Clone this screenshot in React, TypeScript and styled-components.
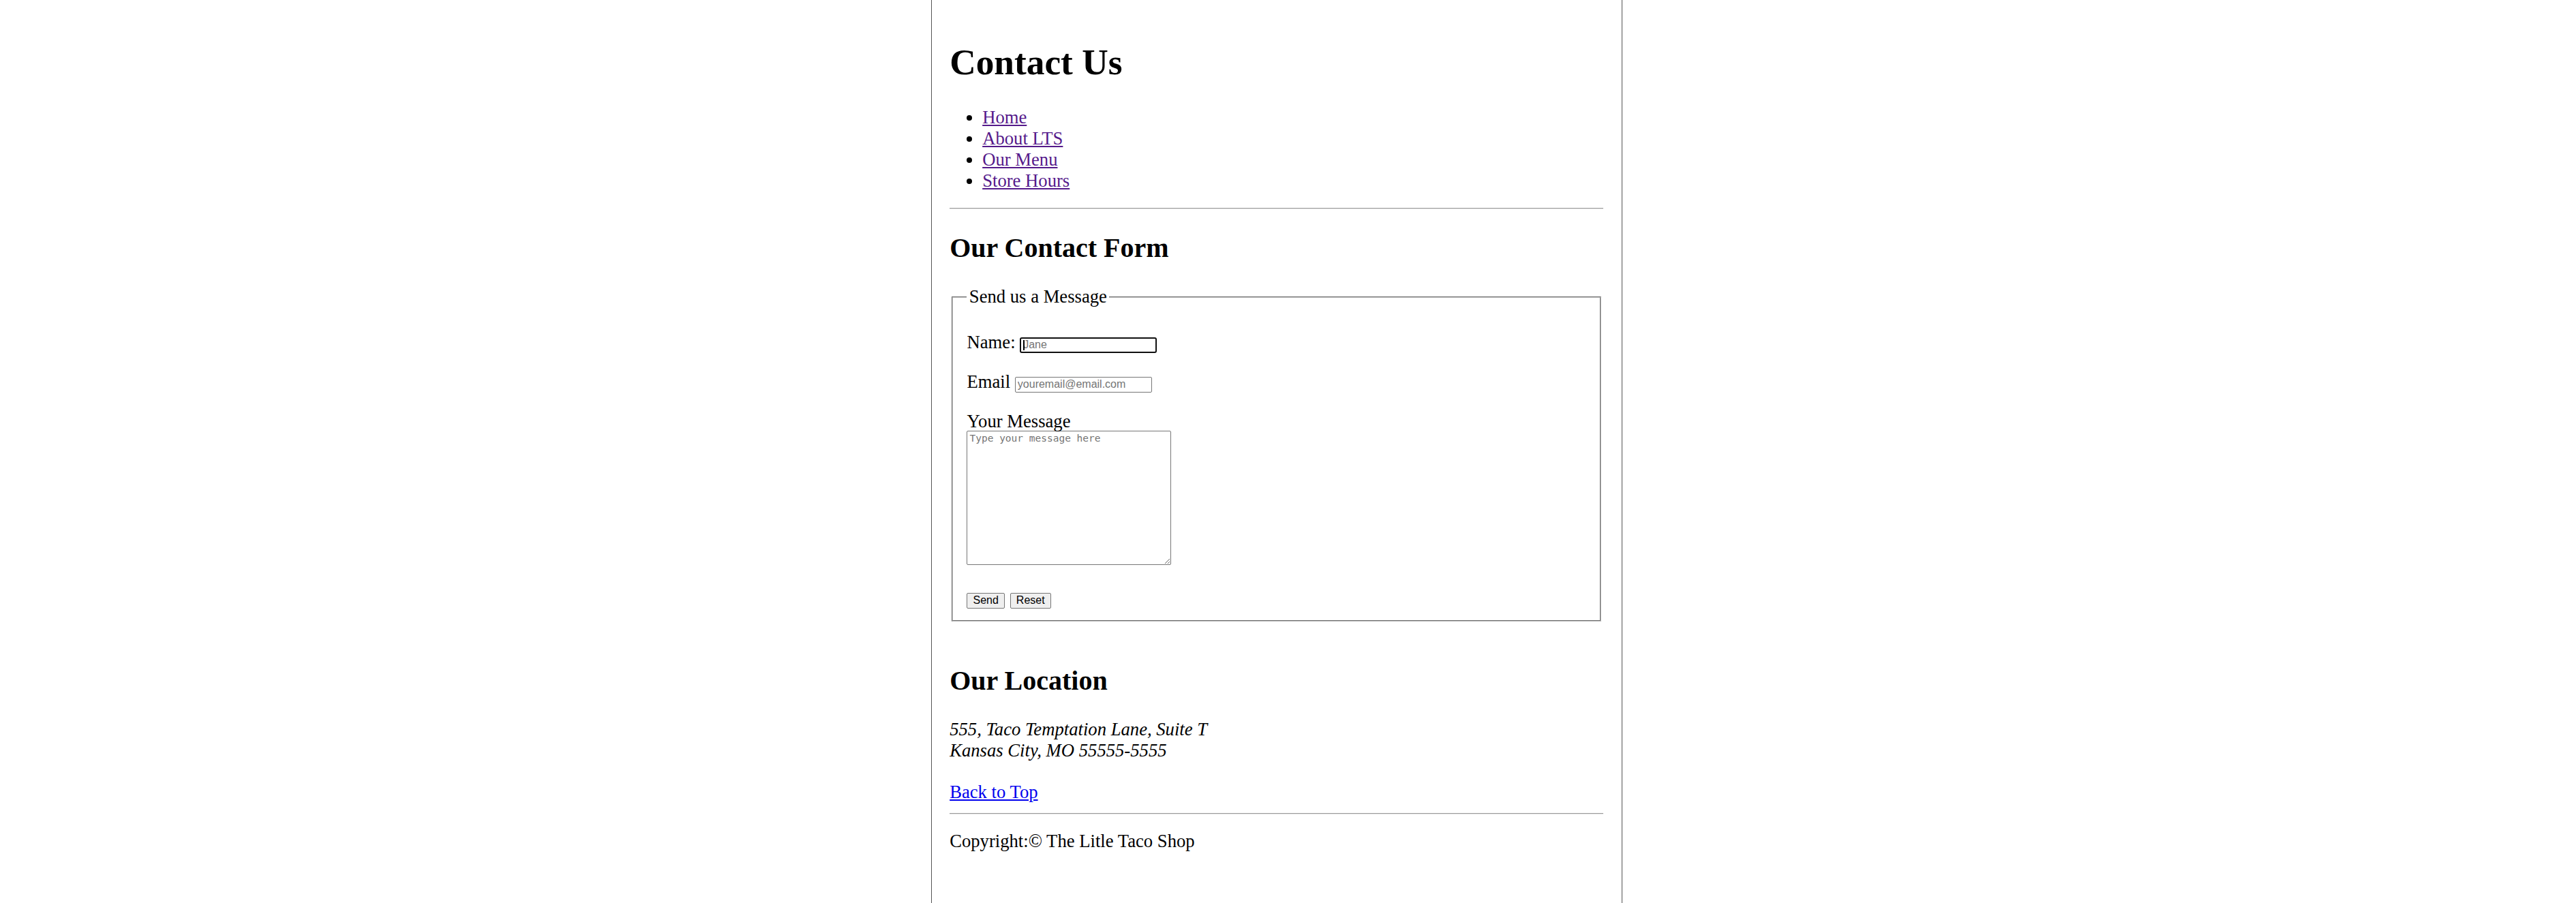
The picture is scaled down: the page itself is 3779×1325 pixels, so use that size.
import React from "react";
import styled, { createGlobalStyle } from "styled-components";

const GlobalStyle = createGlobalStyle`
  html,
  body {
    margin: 0;
    background: #fff;
  }

  body {
    font-family: "Liberation Serif", "Times New Roman", serif;
    font-size: 26.67px;
    color: #000;
  }
`;

const Page = styled.div`
  box-sizing: border-box;
  width: 1014px;
  min-height: 100vh;
  margin-left: calc(50% - 524px);
  padding: 24px 26.67px 40px;
  border-left: 1px solid #555;
  border-right: 1px solid #555;
`;

const Title = styled.h1`
  font-size: 53.33px;
  font-weight: bold;
  margin: 35.7px 0;
`;

const NavList = styled.ul`
  margin: 26.67px 0 23.67px;
  padding-left: 48px;
  list-style: disc;
`;

const NavLink = styled.a`
  color: #551a8b;
  text-decoration: underline;
`;

const Rule = styled.hr<{ $flush?: boolean }>`
  height: 0;
  margin: ${(p) => (p.$flush ? "0" : "13.33px 0")};
  border: 0;
  border-top: 1px solid #9a9a9a;
  border-bottom: 1px solid #e6e6e6;
`;

const SectionTitle = styled.h2`
  font-size: 40px;
  font-weight: bold;
  margin: 33.2px 0;
`;

const ContactForm = styled.form`
  margin: 0 0 63px;
`;

const Fieldset = styled.fieldset`
  margin: 0 3.33px;
  padding: 9.33px 20px 16.67px;
  border: 2px groove #c0c0c0;
  min-width: min-content;
`;

const Legend = styled.legend`
  padding: 0 3.33px;
`;

const Field = styled.p`
  margin: 26.67px 0;
`;

const CaretWrap = styled.span`
  position: relative;
  display: inline-flex;
  vertical-align: baseline;
`;

const Caret = styled.span`
  position: absolute;
  left: 5px;
  top: 4px;
  width: 1.5px;
  height: 15px;
  background: #000;
`;

const TextInput = styled.input<{ $focused?: boolean }>`
  box-sizing: border-box;
  width: 201px;
  height: 23px;
  margin: 0;
  padding: ${(p) => (p.$focused ? "0 2px 0 3px" : "1px 3px")};
  border: ${(p) => (p.$focused ? "2px solid #101010" : "1px solid #767676")};
  border-radius: ${(p) => (p.$focused ? "3px" : "2px")};
  outline: none;
  font-family: "Liberation Sans", Arial, sans-serif;
  font-size: 16px;
  color: #000;
  vertical-align: baseline;

  &::placeholder {
    color: #757575;
  }
`;

const MessageBox = styled.textarea`
  display: block;
  box-sizing: border-box;
  width: 300px;
  height: 197px;
  margin: -2px 0 0;
  padding: 2px 3px;
  border: 1px solid #767676;
  border-radius: 2px;
  outline: none;
  font-family: "DejaVu Sans Mono", monospace;
  font-size: 14.5px;

  &::placeholder {
    color: #757575;
  }
`;

const ButtonRow = styled.div`
  padding-top: 7px;
  line-height: normal;
`;

const ActionButton = styled.button`
  height: 23px;
  margin: 0;
  padding: 0 8px;
  background: #efefef;
  border: 1px solid #767676;
  border-radius: 2px;
  font-family: "Liberation Sans", Arial, sans-serif;
  font-size: 16px;
  color: #000;
  vertical-align: baseline;

  & + & {
    margin-left: 1.3px;
  }
`;

const Address = styled.address`
  font-style: italic;
  margin: 0;
`;

const BackToTop = styled.p`
  margin: 30px 0 15px;

  a {
    color: #0000ee;
  }
`;

const Copyright = styled.p`
  margin: 24px 0 0;
`;

const navItems = ["Home", "About LTS", "Our Menu", "Store Hours"];

const App: React.FC = () => {
  return (
    <>
      <GlobalStyle />
      <Page>
        <Title id="top">Contact Us</Title>
        <NavList>
          {navItems.map((item) => (
            <li key={item}>
              <NavLink href="#">{item}</NavLink>
            </li>
          ))}
        </NavList>
        <Rule />

        <SectionTitle>Our Contact Form</SectionTitle>
        <ContactForm onSubmit={(e) => e.preventDefault()}>
          <Fieldset>
            <Legend>Send us a Message</Legend>
            <Field>
              Name:{" "}
              <CaretWrap>
                <TextInput $focused name="name" placeholder="Jane" />
                <Caret />
              </CaretWrap>
            </Field>
            <Field>
              Email{" "}
              <TextInput
                type="email"
                name="email"
                placeholder="youremail@email.com"
              />
            </Field>
            <Field>
              Your Message
              <MessageBox name="message" placeholder="Type your message here" />
            </Field>
            <ButtonRow>
              <ActionButton type="submit">Send</ActionButton>{" "}
              <ActionButton type="reset">Reset</ActionButton>
            </ButtonRow>
          </Fieldset>
        </ContactForm>

        <SectionTitle>Our Location</SectionTitle>
        <Address>
          555, Taco Temptation Lane, Suite T
          <br />
          Kansas City, MO 55555-5555
        </Address>
        <BackToTop>
          <a href="#top">Back to Top</a>
        </BackToTop>
        <Rule $flush />
        <Copyright>Copyright:© The Litle Taco Shop</Copyright>
      </Page>
    </>
  );
};

export default App;
